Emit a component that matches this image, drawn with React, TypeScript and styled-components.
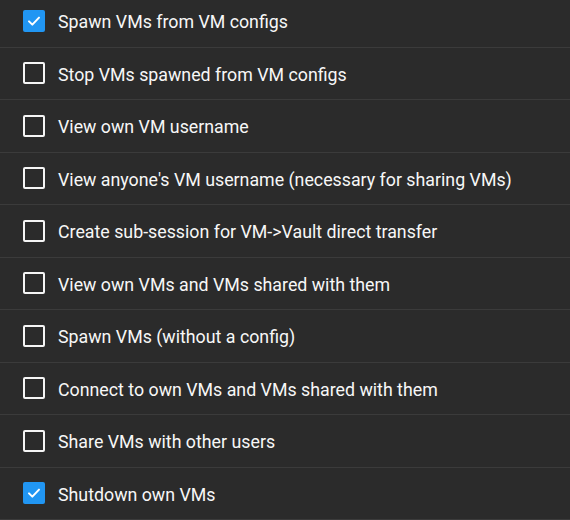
import React, { useState } from "react";
import styled, { createGlobalStyle } from "styled-components";

const GlobalStyle = createGlobalStyle`
  html, body {
    margin: 0;
    padding: 0;
    background: #2b2b2b;
    overflow: hidden;
  }
`;

const permissions = [
  { label: "Spawn VMs from VM configs", checked: true },
  { label: "Stop VMs spawned from VM configs", checked: false },
  { label: "View own VM username", checked: false },
  { label: "View anyone's VM username (necessary for sharing VMs)", checked: false },
  { label: "Create sub-session for VM->Vault direct transfer", checked: false },
  { label: "View own VMs and VMs shared with them", checked: false },
  { label: "Spawn VMs (without a config)", checked: false },
  { label: "Connect to own VMs and VMs shared with them", checked: false },
  { label: "Share VMs with other users", checked: false },
  { label: "Shutdown own VMs", checked: true },
];

const App = () => {
  const [state, setState] = useState(permissions.map((p) => p.checked));

  const toggle = (i: number) =>
    setState((s) => s.map((v, j) => (j === i ? !v : v)));

  return (
    <>
      <GlobalStyle />
      <List>
        {permissions.map((p, i) => (
          <Row key={p.label} onClick={() => toggle(i)}>
            <Box checked={state[i]}>
              {state[i] && (
                <svg width="16" height="16" viewBox="0 0 24 24">
                  <path
                    d="M4.5 12.5l5 5 10-10.5"
                    fill="none"
                    stroke="#fff"
                    strokeWidth="3"
                    strokeLinecap="round"
                    strokeLinejoin="round"
                  />
                </svg>
              )}
            </Box>
            <Label>{p.label}</Label>
          </Row>
        ))}
      </List>
    </>
  );
};

export default App;

const List = styled.div`
  display: flex;
  flex-direction: column;
  margin-top: -5px;
  font-family: Roboto, "Liberation Sans", sans-serif;
`;

const Row = styled.div`
  display: flex;
  align-items: center;
  gap: 13px;
  height: 52.5px;
  box-sizing: border-box;
  padding: 0 23px;
  border-bottom: 1px solid #3b3b3b;
  cursor: pointer;
`;

const Box = styled.div<{ checked: boolean }>`
  width: 22px;
  height: 22px;
  box-sizing: border-box;
  border-radius: 2px;
  flex: none;
  display: flex;
  align-items: center;
  justify-content: center;
  background: ${(p) => (p.checked ? "#2196f3" : "transparent")};
  border: ${(p) => (p.checked ? "none" : "2px solid #f5f5f5")};
`;

const Label = styled.span`
  color: #f7f7f7;
  font-size: 17.8px;
  padding-top: 2px;
`;
